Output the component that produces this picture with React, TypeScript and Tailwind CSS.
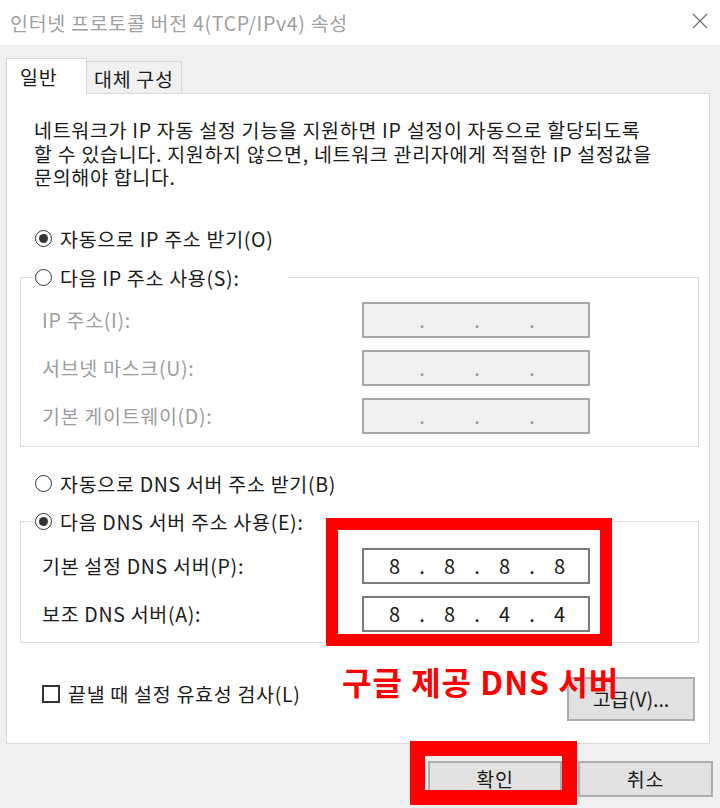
import { Fragment } from "react";
import clsx from "clsx";

const Radio = ({ checked, label }: { checked?: boolean; label: string }) => (
  <div className="flex h-[24px] items-center gap-[8px] whitespace-nowrap">
    <span className="flex h-[17px] w-[17px] items-center justify-center rounded-full border-[1.5px] border-[#333]">
      {checked && <span className="h-[9px] w-[9px] rounded-full bg-[#333]" />}
    </span>
    <span>{label}</span>
  </div>
);

const IpBox = ({ values, disabled }: { values?: string[]; disabled?: boolean }) => {
  const parts = values ?? ["", "", "", ""];
  return (
    <div
      className={clsx(
        "flex h-[36px] w-[228px] items-center border-2 pl-[8px] text-[20px] tracking-normal",
        disabled
          ? "border-[#a6a6a6] bg-[#f0f0f0] text-[#9a9a9a]"
          : "border-[#7a7a7a] bg-white text-[#1a1a1a]"
      )}
    >
      {parts.map((p, i) => (
        <Fragment key={i}>
          {i > 0 && <span className="w-[10px] text-center">.</span>}
          <span className="w-[45px] text-center">{p}</span>
        </Fragment>
      ))}
    </div>
  );
};

const Row = ({
  label,
  values,
  disabled,
}: {
  label: string;
  values?: string[];
  disabled?: boolean;
}) => (
  <div className="flex items-center">
    <span className={clsx("w-[320px]", disabled ? "text-[#9d9d9d]" : "text-[#1a1a1a]")}>
      {label}
    </span>
    <IpBox values={values} disabled={disabled} />
  </div>
);

const Button = ({ label, className }: { label: string; className?: string }) => (
  <button
    type="button"
    className={clsx(
      "flex items-center justify-center border-2 border-[#adadad] bg-[#e1e1e1] text-[#1a1a1a]",
      className
    )}
  >
    {label}
  </button>
);

export default function App() {
  return (
    <div className="relative flex h-[808px] w-[720px] flex-col overflow-hidden bg-[#f0f0f0] font-['Noto_Sans_CJK_KR','Liberation_Sans',sans-serif] text-[19.5px] tracking-[0.7px] text-[#1a1a1a]">
      {/* title bar */}
      <div className="flex h-[45px] shrink-0 items-center justify-between bg-white pl-[10px] pr-[12px]">
        <span className="text-[#a0a0a0]">인터넷 프로토콜 버전 4(TCP/IPv4) 속성</span>
        <svg width="16" height="16" viewBox="0 0 16 16" className="-mt-[4px]">
          <path d="M1 1 L15 15 M15 1 L1 15" stroke="#707070" strokeWidth="1.3" />
        </svg>
      </div>

      {/* tabs */}
      <div className="relative z-10 mt-[13px] -mb-px flex h-[36px] items-end pl-[6px]">
        <div className="h-[36px] w-[81px] border-x border-t border-[#d9d9d9] bg-white pl-[13px] pt-[3px]">
          일반
        </div>
        <div className="h-[33px] w-[95px] border-y border-r border-[#d9d9d9] bg-[#f0f0f0] pl-[7px] pt-[2px]">
          대체 구성
        </div>
      </div>

      {/* general tab panel */}
      <div className="ml-[6px] flex h-[651px] w-[704px] flex-col border border-[#d9d9d9] bg-white">
        <p className="pl-[27px] pt-[24px] leading-[23.5px]">
          네트워크가 IP 자동 설정 기능을 지원하면 IP 설정이 자동으로 할당되도록
          <br />할 수 있습니다. 지원하지 않으면, 네트워크 관리자에게 적절한 IP 설정값을
          <br />문의해야 합니다.
        </p>

        <div className="mt-[38px] pl-[28px]">
          <Radio checked label="자동으로 IP 주소 받기(O)" />
        </div>

        <fieldset className="ml-[13px] mt-[15px] w-[679px] border border-[#dcdcdc] px-[21px] pb-[12px]">
          <legend className="-ml-[9px] w-[255px] bg-white pl-[2px]">
            <Radio label="다음 IP 주소 사용(S):" />
          </legend>
          <div className="flex flex-col gap-[12px] pt-[12px]">
            <Row disabled label="IP 주소(I):" />
            <Row disabled label="서브넷 마스크(U):" />
            <Row disabled label="기본 게이트웨이(D):" />
          </div>
        </fieldset>

        <div className="mt-[25px] pl-[28px]">
          <Radio label="자동으로 DNS 서버 주소 받기(B)" />
        </div>

        <fieldset className="ml-[13px] mt-[14px] w-[679px] border border-[#dcdcdc] px-[21px] pb-[10px]">
          <legend className="-ml-[9px] w-[295px] bg-white pl-[2px]">
            <Radio checked label="다음 DNS 서버 주소 사용(E):" />
          </legend>
          <div className="flex flex-col gap-[12px] pt-[14px]">
            <Row label="기본 설정 DNS 서버(P):" values={["8", "8", "8", "8"]} />
            <Row label="보조 DNS 서버(A):" values={["8", "8", "4", "4"]} />
          </div>
        </fieldset>

        <div className="mt-[34px] flex items-start justify-between pl-[35px] pr-[14px]">
          <label className="mt-[5px] flex h-[24px] items-center gap-[8px]">
            <span className="h-[18px] w-[18px] border-2 border-[#333]" />
            끝낼 때 설정 유효성 검사(L)
          </label>
          <Button label="고급(V)..." className="h-[44px] w-[128px] tracking-normal" />
        </div>
      </div>

      {/* dialog buttons */}
      <div className="mt-[17px] flex justify-end gap-[16px] pr-[7px]">
        <Button label="확인" className="h-[36px] w-[134px]" />
        <Button label="취소" className="h-[36px] w-[135px]" />
      </div>

      {/* highlight marks */}
      <div className="absolute left-[326px] top-[518px] h-[128px] w-[286px] border-[12px] border-[#ff0000]" />
      <div className="absolute left-[410px] top-[741px] h-[64px] w-[167px] border-[15px] border-[#ff0000]" />
      <span className="absolute left-[342px] top-[659px] text-[32px] font-bold leading-[44px] tracking-[1px] text-[#ff0000]">
        구글 제공 DNS 서버
      </span>
    </div>
  );
}
